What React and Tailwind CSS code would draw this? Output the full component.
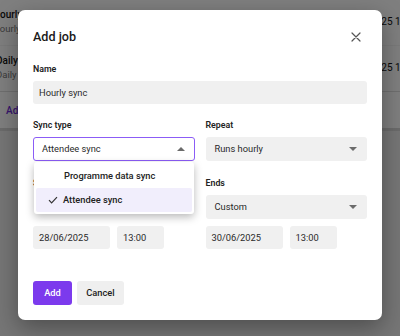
import React from "react";

function Caret({ up }) {
  return (
    <svg width="8" height="4" viewBox="0 0 8 4" className="shrink-0">
      {up ? <path d="M0 4 L4 0 L8 4 Z" fill="#6b6b6b" /> : <path d="M0 0 L4 4 L8 0 Z" fill="#6b6b6b" />}
    </svg>
  );
}

function Label({ children }) {
  return <div className="text-[8.8px] leading-[12px] font-semibold text-[#222] mb-[6px]">{children}</div>;
}

function Field({ children, className = "" }) {
  return (
    <div className={"h-[23px] rounded-[3px] bg-[#f0f0f0] px-[6px] flex items-center text-[9.3px] text-[#2a2a2a] " + className}>
      {children}
    </div>
  );
}

function Select({ children }) {
  return (
    <div className="h-[24px] rounded-[3px] bg-[#f0f0f0] pl-[9px] pr-[10px] flex items-center justify-between text-[9.3px] text-[#2a2a2a]">
      <span>{children}</span>
      <Caret />
    </div>
  );
}

export default function App() {
  return (
    <div className="relative w-[400px] h-[336px] overflow-hidden bg-white" style={{ fontFamily: "Roboto, 'Liberation Sans', sans-serif" }}>
      {/* background page */}
      <div className="flex flex-col text-[10px] text-[#111]">
        <div className="h-[46px] flex items-start justify-between pt-[8px] border-b border-[#f4f4f4]">
          <div className="flex flex-col -ml-[7px]">
            <span className="font-medium leading-[14px]">Hourly sync</span>
            <span className="text-[#777] leading-[14px] text-[9.5px]">Hourly</span>
          </div>
          <span className="mt-[6px] -mr-[20px]">2025 13:00</span>
        </div>
        <div className="h-[46px] flex items-start justify-between pt-[8px] border-b border-[#dedede]">
          <div className="flex flex-col -ml-[4px]">
            <span className="font-medium leading-[14px]">Daily attendee</span>
            <span className="text-[#777] leading-[14px] text-[9.5px]">Daily sync</span>
          </div>
          <span className="mt-[6px] -mr-[20px]">2025 13:00</span>
        </div>
        <div className="h-[39px] flex items-center border-b-[3px] border-[#d6d6d6]">
          <span className="text-[#6d28d9] font-medium text-[10px] pl-[6px]">Add job</span>
        </div>
        <div className="h-[210px] bg-[#ececec]"></div>
      </div>

      {/* overlay */}
      <div className="absolute inset-0 bg-black/50"></div>

      {/* modal */}
      <div className="absolute left-[18px] top-[10px] w-[364px] h-[310px] rounded-[7px] bg-white shadow-[0_8px_24px_rgba(0,0,0,0.35)] px-[15px] pt-[15px] pb-[15px] flex flex-col">
        <div className="flex items-center justify-between h-[24px]">
          <span className="text-[12.6px] font-medium text-[#1a1a1a]">Add job</span>
          <svg width="10" height="10" viewBox="0 0 10 10" className="mr-[6px]">
            <path d="M1 1 L9 9 M9 1 L1 9" stroke="#555" strokeWidth="1.2" strokeLinecap="round" />
          </svg>
        </div>

        <div className="mt-[14px]">
          <Label>Name</Label>
          <Field>Hourly sync</Field>
        </div>

        <div className="mt-[15px] grid grid-cols-2 gap-x-[11px]">
          <div className="relative">
            <Label>Sync type</Label>
            <div className="h-[24px] rounded-[3px] border border-[#8b5cf6] bg-white pl-[8px] pr-[9px] flex items-center justify-between text-[9.3px] text-[#2a2a2a]">
              <span>Attendee sync</span>
              <Caret up />
            </div>
            {/* dropdown menu */}
            <div className="absolute left-[1px] right-[1px] top-[43px] z-10 bg-white rounded-[3px] shadow-[0_3px_8px_rgba(0,0,0,0.28)] px-[2px] py-[2px] flex flex-col">
              <div className="h-[24px] flex items-center pl-[28px] text-[9.3px] font-medium text-[#222]">Programme data sync</div>
              <div className="h-[24px] flex items-center rounded-[2px] bg-[#f1eefc] text-[9.3px] font-medium text-[#222]">
                <svg width="10" height="8" viewBox="0 0 10 8" className="ml-[12px] mr-[5px]">
                  <path d="M1 4.2 L3.6 6.8 L9 1.2" stroke="#333" strokeWidth="1.2" fill="none" />
                </svg>
                Attendee sync
              </div>
            </div>
          </div>
          <div>
            <Label>Repeat</Label>
            <Select>Runs hourly</Select>
          </div>
        </div>

        <div className="mt-[16px] grid grid-cols-2 gap-x-[11px]">
          <div>
            <Label>Starts</Label>
            <div className="h-[24px]"></div>
            <div className="mt-[7px] flex gap-[7px]">
              <Field className="w-[77px]">28/06/2025</Field>
              <Field className="w-[47px]">13:00</Field>
            </div>
          </div>
          <div>
            <Label>Ends</Label>
            <Select>Custom</Select>
            <div className="mt-[7px] flex gap-[7px]">
              <Field className="w-[77px]">30/06/2025</Field>
              <Field className="w-[47px]">13:00</Field>
            </div>
          </div>
        </div>

        <div className="mt-auto flex gap-[5px]">
          <button className="h-[24px] w-[39px] rounded-[3px] bg-[#7c3aed] text-white text-[9.3px] font-medium">Add</button>
          <button className="h-[24px] w-[47px] rounded-[3px] bg-[#efefef] text-[#222] text-[9.3px] font-medium">Cancel</button>
        </div>
      </div>
    </div>
  );
}
